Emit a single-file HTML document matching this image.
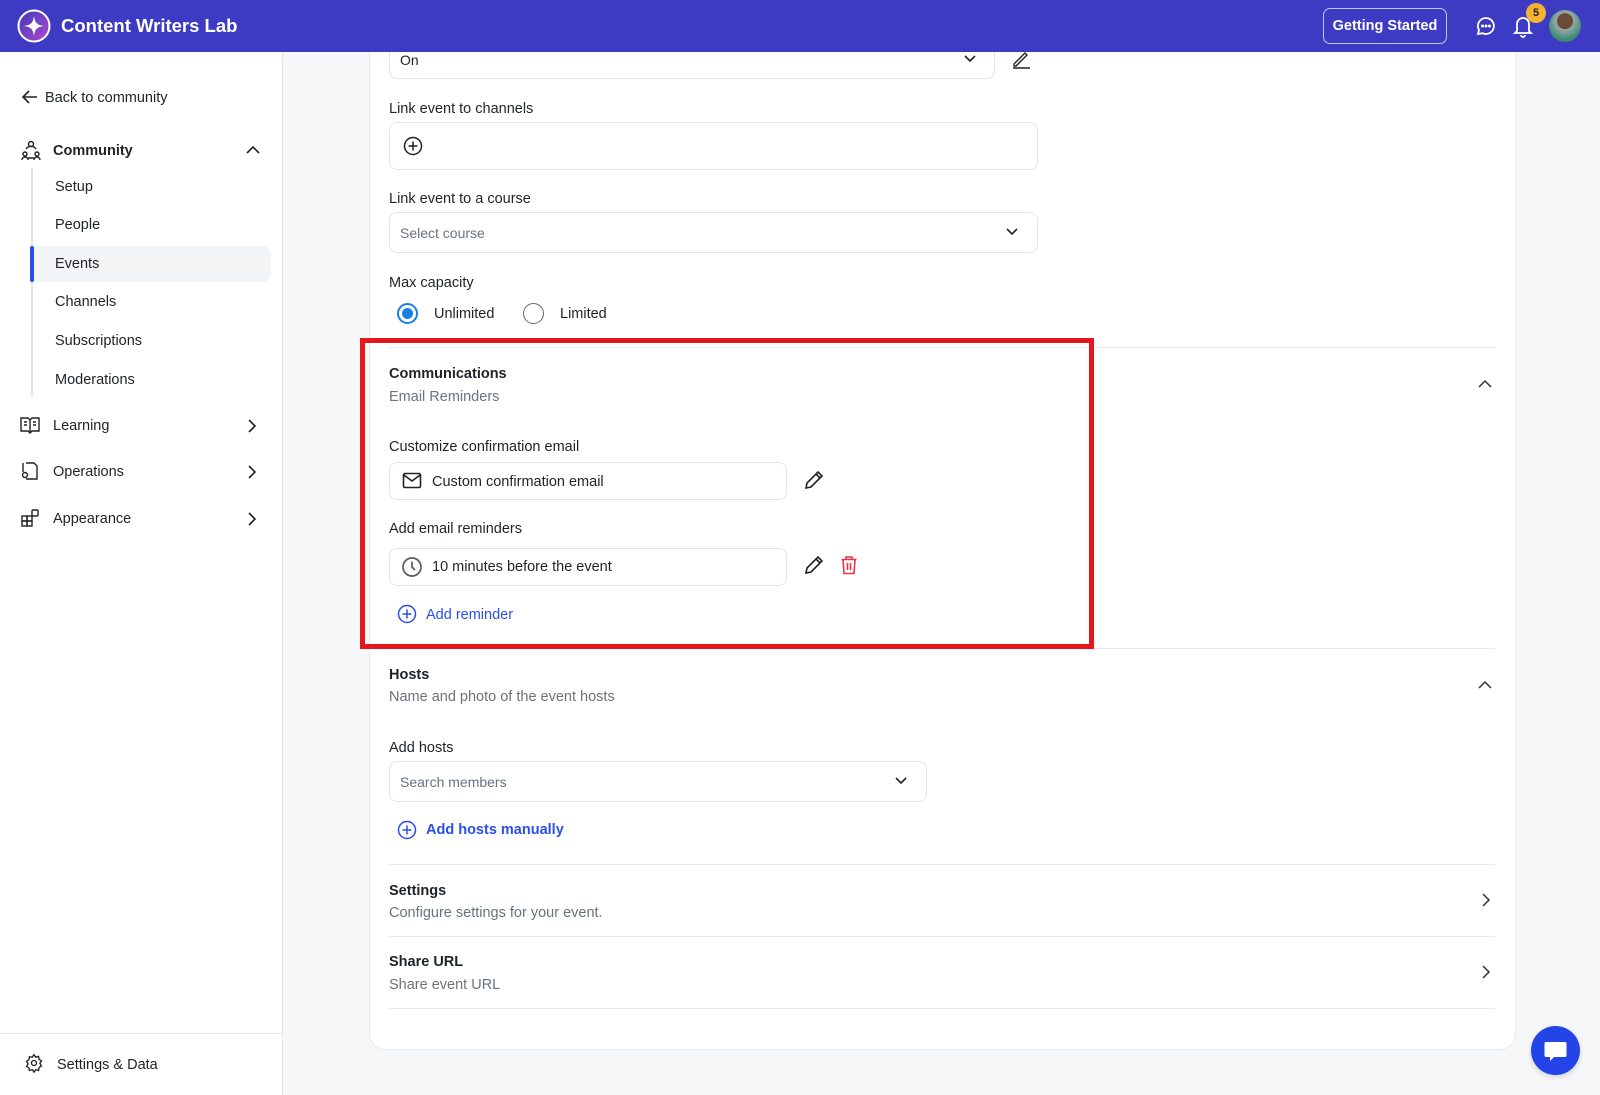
<!DOCTYPE html>
<html><head><meta charset="utf-8"><style>
*{box-sizing:border-box;margin:0;padding:0}
body{width:1600px;height:1095px;overflow:hidden;background:#f6f7f9;font-family:"Liberation Sans",sans-serif;color:#1f2328;font-size:14.5px;position:relative}
.abs{position:absolute}
.hdr{left:0;top:0;width:1600px;height:52px;background:#3d3bc4}
.z{z-index:10}
.side{left:0;top:52px;width:283px;height:1043px;background:#fff;border-right:1px solid #e5e7eb}
.card{left:369px;top:30px;width:1147px;height:1020px;background:#fff;border:1px solid #e8eaee;border-radius:16px}
.t{position:absolute;white-space:nowrap;line-height:1}
.box{position:absolute;border:1px solid #e3e5e8;border-radius:8px;background:#fff}
.hr{position:absolute;left:389px;width:1106px;height:1px;background:#e8eaee}
.b{font-weight:bold}
.g{color:#6b7280}
.blue{color:#2b4ee8}
svg{position:absolute}
</style></head><body>
<div class="abs side"></div>
<svg style="left:21px;top:89px" width="18" height="16" viewBox="0 0 18 16" fill="none" stroke="#1f2328" stroke-width="1.6"><path d="M16 8H3M8 2L2 8l6 6"/></svg>
<div class="t" style="left:45px;top:91px">Back to community</div>
<svg style="left:20px;top:139px" width="22" height="22" viewBox="0 0 22 22" fill="none" stroke="#1f2328" stroke-width="1.4"><circle cx="11" cy="5" r="2.5"/><circle cx="5" cy="15" r="2"/><circle cx="17" cy="15" r="2"/><path d="M2 21c0-2 1.5-3 3-3s3 1 3 3M14 21c0-2 1.5-3 3-3s3 1 3 3M6 10a6 6 0 0 1 10 0M8 19h6"/></svg>
<div class="t b" style="left:53px;top:144px">Community</div>
<svg style="left:245px;top:145px" width="16" height="10" viewBox="0 0 16 10" fill="none" stroke="#1f2328" stroke-width="1.6"><path d="M2 8l6-6 6 6"/></svg>
<div class="abs" style="left:31px;top:168px;width:2px;height:228px;background:#e2e4e8"></div>
<div class="abs" style="left:31px;top:246px;width:240px;height:36px;background:#f3f4f6;border-radius:0 8px 8px 0"></div>
<div class="abs" style="left:30px;top:246px;width:4px;height:36px;background:#2b4ee8;border-radius:2px"></div>
<div class="t" style="left:55px;top:180px">Setup</div>
<div class="t" style="left:55px;top:218px">People</div>
<div class="t" style="left:55px;top:257px">Events</div>
<div class="t" style="left:55px;top:295px">Channels</div>
<div class="t" style="left:55px;top:334px">Subscriptions</div>
<div class="t" style="left:55px;top:373px">Moderations</div>
<svg style="left:20px;top:416px" width="20" height="18" viewBox="0 0 20 18" fill="none" stroke="#1f2328" stroke-width="1.4"><path d="M1 2h7l2 2 2-2h7v13h-7l-2 2-2-2H1z"/><path d="M10 4v13M4 6h3M4 9h3M13 6h3M13 9h3"/></svg>
<div class="t" style="left:53px;top:419px">Learning</div>
<svg style="left:20px;top:461px" width="20" height="20" viewBox="0 0 20 20" fill="none" stroke="#1f2328" stroke-width="1.4"><path d="M6 2h8l3 3v13H6M3 11V2"/><circle cx="5" cy="14" r="2.5"/></svg>
<div class="t" style="left:53px;top:465px">Operations</div>
<svg style="left:20px;top:508px" width="20" height="20" viewBox="0 0 20 20" fill="none" stroke="#1f2328" stroke-width="1.4"><rect x="2" y="8" width="5" height="5"/><rect x="7" y="8" width="5" height="5"/><rect x="2" y="13" width="5" height="5"/><rect x="7" y="13" width="5" height="5"/><rect x="12" y="2" width="6" height="6" rx="1"/></svg>
<div class="t" style="left:53px;top:512px">Appearance</div>
<svg style="left:247px;top:418px" width="10" height="16" viewBox="0 0 10 16" fill="none" stroke="#1f2328" stroke-width="1.6"><path d="M2 2l6 6-6 6"/></svg>
<svg style="left:247px;top:464px" width="10" height="16" viewBox="0 0 10 16" fill="none" stroke="#1f2328" stroke-width="1.6"><path d="M2 2l6 6-6 6"/></svg>
<svg style="left:247px;top:511px" width="10" height="16" viewBox="0 0 10 16" fill="none" stroke="#1f2328" stroke-width="1.6"><path d="M2 2l6 6-6 6"/></svg>
<div class="abs" style="left:0;top:1033px;width:283px;height:1px;background:#e5e7eb"></div>
<svg style="left:24px;top:1053px" width="20" height="20" viewBox="0 0 24 24" fill="none" stroke="#1f2328" stroke-width="1.6"><circle cx="12" cy="12" r="3"/><path d="M12 2l2 3 3.5-1 .5 3.5 3 2-2 3 2 3-3 2-.5 3.5-3.5-1-2 3-2-3-3.5 1L6 18l-3-2 2-3-2-3 3-2 .5-3.5L10 5z"/></svg>
<div class="t" style="left:57px;top:1058px">Settings &amp; Data</div>

<div class="abs card"></div>
<div class="box" style="left:389px;top:36px;width:606px;height:43px;border-top:none;border-radius:0 0 8px 8px"></div>
<div class="t" style="left:400px;top:53px;font-size:14px">On</div>
<svg style="left:963px;top:54px" width="14" height="10" viewBox="0 0 14 10" fill="none" stroke="#1f2328" stroke-width="1.6"><path d="M2 2l5 5 5-5"/></svg>
<svg style="left:1010px;top:49px" width="22" height="20" viewBox="0 0 22 20" fill="none" stroke="#1f2328" stroke-width="1.4"><path d="M4 15L15 4l2 2L6 17H4z"/><path d="M3 19h17"/></svg>
<div class="t" style="left:389px;top:102px">Link event to channels</div>
<div class="box" style="left:389px;top:122px;width:649px;height:48px"></div>
<svg style="left:403px;top:136px" width="20" height="20" viewBox="0 0 20 20" fill="none" stroke="#1f2328" stroke-width="1.5"><circle cx="10" cy="10" r="8.5"/><path d="M10 5.5v9M5.5 10h9"/></svg>
<div class="t" style="left:389px;top:192px">Link event to a course</div>
<div class="box" style="left:389px;top:212px;width:649px;height:41px"></div>
<div class="t g" style="left:400px;top:226px;font-size:14px">Select course</div>
<svg style="left:1005px;top:227px" width="14" height="10" viewBox="0 0 14 10" fill="none" stroke="#1f2328" stroke-width="1.6"><path d="M2 2l5 5 5-5"/></svg>
<div class="t" style="left:389px;top:276px">Max capacity</div>
<div class="abs" style="left:397px;top:303px;width:21px;height:21px;border-radius:50%;border:2px solid #1a7fe0;background:#fff"></div>
<div class="abs" style="left:402px;top:308px;width:11px;height:11px;border-radius:50%;background:#1a7fe0"></div>
<div class="t" style="left:434px;top:307px">Unlimited</div>
<div class="abs" style="left:523px;top:303px;width:21px;height:21px;border-radius:50%;border:1.5px solid #666;background:#fff"></div>
<div class="t" style="left:560px;top:307px">Limited</div>
<div class="hr" style="top:347px"></div>

<div class="t b" style="left:389px;top:367px">Communications</div>
<div class="t g" style="left:389px;top:390px">Email Reminders</div>
<svg style="left:1477px;top:379px" width="16" height="10" viewBox="0 0 16 10" fill="none" stroke="#333" stroke-width="1.5"><path d="M2 8l6-6 6 6"/></svg>
<div class="t" style="left:389px;top:440px">Customize confirmation email</div>
<div class="box" style="left:389px;top:462px;width:398px;height:38px"></div>
<svg style="left:402px;top:472px" width="20" height="17" viewBox="0 0 20 17" fill="none" stroke="#1f2328" stroke-width="1.6"><rect x="1.5" y="1.5" width="17" height="14" rx="1.5"/><path d="M2 3l8 6 8-6"/></svg>
<div class="t" style="left:432px;top:475px">Custom confirmation email</div>
<svg style="left:803px;top:469px" width="22" height="22" viewBox="0 0 22 22" fill="none" stroke="#1f2328" stroke-width="1.6"><path d="M3 19l1-5L15 3l4 4L8 18z"/><path d="M13 5l4 4"/></svg>
<div class="t" style="left:389px;top:522px">Add email reminders</div>
<div class="box" style="left:389px;top:548px;width:398px;height:38px"></div>
<svg style="left:401px;top:556px" width="22" height="22" viewBox="0 0 22 22" fill="none" stroke="#555a64" stroke-width="1.7"><circle cx="11" cy="11" r="9"/><path d="M11 5.5V11l3 3"/></svg>
<div class="t" style="left:432px;top:560px">10 minutes before the event</div>
<svg style="left:803px;top:554px" width="22" height="22" viewBox="0 0 22 22" fill="none" stroke="#1f2328" stroke-width="1.6"><path d="M3 19l1-5L15 3l4 4L8 18z"/><path d="M13 5l4 4"/></svg>
<svg style="left:840px;top:555px" width="18" height="20" viewBox="0 0 18 20" fill="none" stroke="#e8344a" stroke-width="1.6"><path d="M1.5 4.5h15M6 4.5V2h6v2.5M3 4.5l1 14h10l1-14M7.5 8v7M10.5 8v7"/></svg>
<svg style="left:397px;top:604px" width="20" height="20" viewBox="0 0 20 20" fill="none" stroke="#2b4ee8" stroke-width="1.5"><circle cx="10" cy="10" r="8.5"/><path d="M10 5.5v9M5.5 10h9"/></svg>
<div class="t blue" style="left:426px;top:608px">Add reminder</div>
<div class="hr" style="top:648px"></div>

<div class="t b" style="left:389px;top:668px">Hosts</div>
<div class="t g" style="left:389px;top:690px">Name and photo of the event hosts</div>
<svg style="left:1477px;top:680px" width="16" height="10" viewBox="0 0 16 10" fill="none" stroke="#333" stroke-width="1.5"><path d="M2 8l6-6 6 6"/></svg>
<div class="t" style="left:389px;top:741px">Add hosts</div>
<div class="box" style="left:389px;top:761px;width:538px;height:41px"></div>
<div class="t g" style="left:400px;top:775px;font-size:14px">Search members</div>
<svg style="left:894px;top:776px" width="14" height="10" viewBox="0 0 14 10" fill="none" stroke="#1f2328" stroke-width="1.6"><path d="M2 2l5 5 5-5"/></svg>
<svg style="left:397px;top:820px" width="20" height="20" viewBox="0 0 20 20" fill="none" stroke="#2b4ee8" stroke-width="1.5"><circle cx="10" cy="10" r="8.5"/><path d="M10 5.5v9M5.5 10h9"/></svg>
<div class="t b blue" style="left:426px;top:823px">Add hosts manually</div>
<div class="hr" style="top:864px"></div>
<div class="t b" style="left:389px;top:884px">Settings</div>
<div class="t g" style="left:389px;top:906px">Configure settings for your event.</div>
<svg style="left:1481px;top:892px" width="10" height="16" viewBox="0 0 10 16" fill="none" stroke="#333" stroke-width="1.5"><path d="M2 2l6 6-6 6"/></svg>
<div class="hr" style="top:936px"></div>
<div class="t b" style="left:389px;top:955px">Share URL</div>
<div class="t g" style="left:389px;top:978px">Share event URL</div>
<svg style="left:1481px;top:964px" width="10" height="16" viewBox="0 0 10 16" fill="none" stroke="#333" stroke-width="1.5"><path d="M2 2l6 6-6 6"/></svg>
<div class="hr" style="top:1008px"></div>

<div class="abs" style="left:360px;top:338px;width:734px;height:311px;border:5px solid #e5191c"></div>
<div class="abs" style="left:1531px;top:1026px;width:49px;height:49px;border-radius:50%;background:#2444e8;box-shadow:0 2px 6px rgba(0,0,0,.15)"></div>
<svg style="left:1543px;top:1040px" width="25" height="24" viewBox="0 0 25 24"><path d="M3 2h19a1.5 1.5 0 0 1 1.5 1.5v12A1.5 1.5 0 0 1 22 17H11l-4 4v-4H3a1.5 1.5 0 0 1-1.5-1.5v-12A1.5 1.5 0 0 1 3 2z" fill="#fff"/></svg>

<div class="abs hdr z"></div>
<svg class="z" style="left:17px;top:9px" width="34" height="34" viewBox="0 0 34 34"><defs><linearGradient id="lg" x1="0" y1="0" x2="1" y2="1"><stop offset="0" stop-color="#3a3ab8"/><stop offset="1" stop-color="#b44ad0"/></linearGradient></defs><circle cx="17" cy="17" r="15.5" fill="url(#lg)" stroke="#fff" stroke-width="2"/><path d="M17 7 C18 14 20 16 27 17 C20 18 18 20 17 27 C16 20 14 18 7 17 C14 16 16 14 17 7Z" fill="#fff"/></svg>
<div class="t b z" style="left:61px;top:17px;font-size:18.5px;color:#fff">Content Writers Lab</div>
<div class="abs z" style="left:1323px;top:8px;width:124px;height:36px;border:1px solid #c5c6f0;border-radius:7px;color:#fff;font-size:14.5px;font-weight:bold;text-align:center;line-height:34px;white-space:nowrap">Getting Started</div>
<svg class="z" style="left:1475px;top:15px" width="22" height="22" viewBox="0 0 22 22" fill="none" stroke="#fff" stroke-width="1.8"><path d="M11 3a8 8 0 1 1-3.6 15.2L3 19l1-4A8 8 0 0 1 11 3z"/><circle cx="7.5" cy="11" r=".6" fill="#fff"/><circle cx="11" cy="11" r=".6" fill="#fff"/><circle cx="14.5" cy="11" r=".6" fill="#fff"/></svg>
<svg class="z" style="left:1512px;top:14px" width="22" height="24" viewBox="0 0 22 24" fill="none" stroke="#fff" stroke-width="1.8"><path d="M5 17V10a6 6 0 0 1 12 0v7l2 2H3z"/><path d="M9 21a2 2 0 0 0 4 0"/></svg>
<div class="abs z" style="left:1526px;top:3px;width:20px;height:20px;border-radius:50%;background:#f5b335;color:#222;font-size:11px;font-weight:bold;text-align:center;line-height:20px">5</div>
<div class="abs z" style="left:1549px;top:10px;width:32px;height:32px;border-radius:50%;background:radial-gradient(circle at 50% 35%,#6b4a3a 0 30%,#9aa 31%,#3a8a70 70%)"></div>
</body></html>
